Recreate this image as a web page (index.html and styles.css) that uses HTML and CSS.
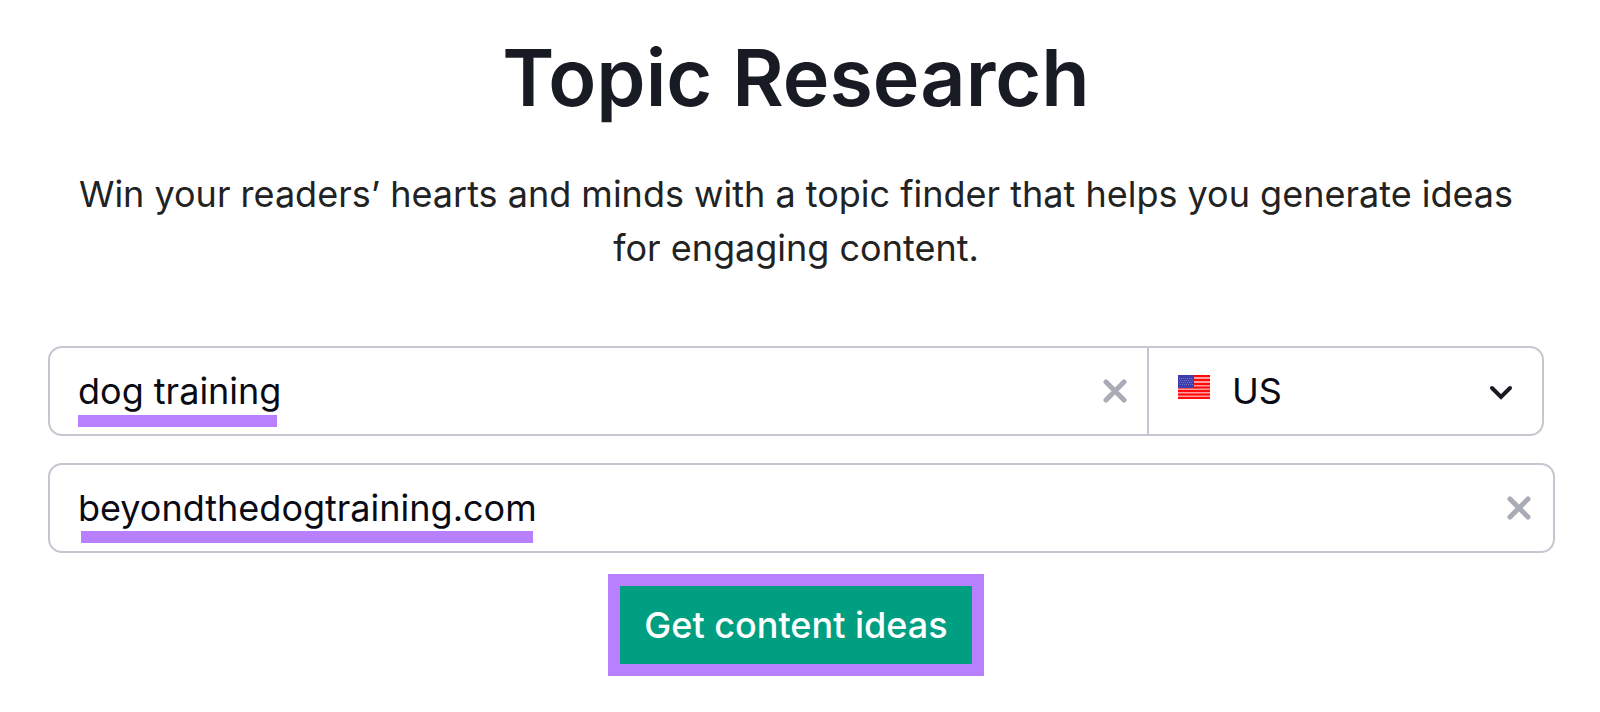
FILE: index.html
```html
<!DOCTYPE html>
<html lang="en">
<head>
<meta charset="utf-8">
<meta name="viewport" content="width=device-width, initial-scale=1">
<title>Topic Research</title>
<link rel="stylesheet" href="styles.css">
</head>
<body>
<main class="page">
  <h1 class="title">Topic Research</h1>
  <p class="lead">Win your readers’ hearts and minds with a topic finder that helps you generate ideas for engaging content.</p>
  <form class="form">
    <div class="row row-topic">
      <div class="field">
        <input class="input" type="text" value="dog training" aria-label="Topic">
        <span class="mark mark-topic"></span>
        <button class="clear" type="button" aria-label="Clear topic">
          <svg width="24" height="24" viewBox="0 0 24 24"><path d="M3 3 21 21M21 3 3 21"/></svg>
        </button>
      </div>
      <div class="country">
        <svg class="flag" width="32" height="24" viewBox="0 0 32 24">
          <path fill="#ff9c9c" d="M0 0h32v24H0z"/>
          <path stroke="#ff0a0a" stroke-width="2" d="M0 1h32M0 5h32M0 9h32M0 12.500h32M0 16h32M0 19.500h32M0 23h32"/>
          <path fill="#3d3dab" d="M0 0h16v13H0z"/>
          <path stroke="#7474c4" stroke-width="1" stroke-dasharray="1 1" d="M1 3.500h14M2 5.500h13M1 7.500h14M2 9.500h13"/>
        </svg>
        <select class="select" aria-label="Country"><option>US</option></select>
        <svg class="chevron" width="24" height="16" viewBox="0 0 24 16"><path d="M3 4l9 9 9-9"/></svg>
      </div>
    </div>
    <div class="row row-domain">
      <div class="field">
        <input class="input" type="text" value="beyondthedogtraining.com" aria-label="Domain">
        <span class="mark mark-domain"></span>
        <button class="clear" type="button" aria-label="Clear domain">
          <svg width="24" height="24" viewBox="0 0 24 24"><path d="M3 3 21 21M21 3 3 21"/></svg>
        </button>
      </div>
    </div>
    <button class="submit" type="submit">Get content ideas</button>
  </form>
</main>
</body>
</html>
```
FILE: styles.css
```css
* { box-sizing: border-box; }
body {
  margin: 0;
  background: #fff;
  color: #181b23;
  font-family: Inter, "Liberation Sans", sans-serif;
}
.page {
  padding: 27px 56px 36px 48px;
}
.title {
  margin: 0;
  font-size: 79px;
  line-height: 100px;
  font-weight: 600;
  text-align: center;
}
.lead {
  margin: 40px auto 0;
  max-width: 1460px;
  color: #222;
  font-size: 36px;
  line-height: 54px;
  font-weight: 370;
  text-align: center;
}
.form {
  display: flex;
  flex-direction: column;
  margin-top: 71px;
}
.row {
  display: flex;
  height: 90px;
  border: 2px solid #c4c7cf;
  border-radius: 14px;
}
.row-domain { margin: 27px -11px 0 0; }
.field {
  position: relative;
  display: flex;
  flex: 1;
  align-items: center;
  padding: 0 20px 0 28px;
}
.row-domain .field { padding-right: 22px; }
.input,
.select {
  flex: 1;
  min-width: 0;
  padding: 0;
  border: 0;
  outline: 0;
  appearance: none;
  background: none;
  color: #0a0a14;
  font: inherit;
  font-size: 36px;
  font-weight: 370;
}
.mark {
  position: absolute;
  left: 28px;
  top: 67px;
  height: 12px;
  background: #b880ff;
}
.mark-topic { width: 199px; }
.mark-domain {
  left: 31px;
  top: 66px;
  width: 452px;
}
.clear {
  display: flex;
  padding: 0;
  border: 0;
  background: none;
}
.clear path {
  fill: none;
  stroke: #a9abb6;
  stroke-width: 5;
  stroke-linecap: round;
}
.country {
  display: flex;
  flex: 0 0 395px;
  align-items: center;
  gap: 22px;
  padding: 0 29px;
  border-left: 2px solid #c4c7cf;
}
.flag { margin-bottom: 8px; }
.chevron { margin-top: 2px; }
.chevron path {
  fill: none;
  stroke: #181b23;
  stroke-width: 4;
  stroke-linecap: round;
}
.submit {
  align-self: center;
  margin-top: 21px;
  padding: 18px 24px;
  border: 12px solid #b880ff;
  background: #009f81;
  color: #fff;
  font: inherit;
  font-size: 36px;
  line-height: 42px;
  font-weight: 500;
}
```
